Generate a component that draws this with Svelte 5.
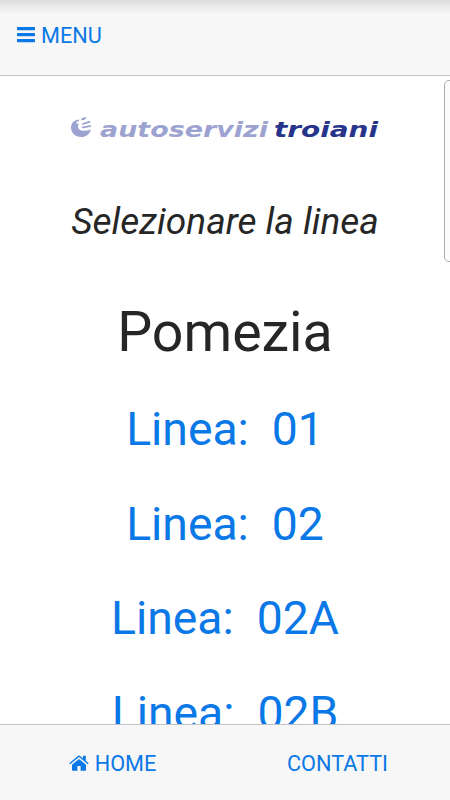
<script>
  const city = 'Pomezia';
  const lines = ['01', '02', '02A', '02B'];
</script>

<div class="app">
  <header class="navbar">
    <a class="nav-link" href="#menu">
      <svg class="bars" viewBox="0 0 18 16" aria-hidden="true">
        <rect x="0" y="0" width="18" height="3.200" rx="0.6" />
        <rect x="0" y="6" width="18" height="3.200" rx="0.6" />
        <rect x="0" y="12" width="18" height="3.200" rx="0.6" />
      </svg>
      <span>MENU</span>
    </a>
  </header>

  <main class="content">
    <svg class="logo" viewBox="0 0 310 30" role="img" aria-label="autoservizi troiani">
      <g class="mark">
        <path d="M9.200 4.400C4.500 4.400 1 8 1 12.500c0 5.400 4.400 9.500 10 9.500 5 0 9-3.300 10-7.600-2.600 1.100-5.300 1.600-8 1.300-4-.4-5.500-2.500-4.800-5.500l.4-1.800H6.200L6.800 6.600h1.900z" />
        <path d="M11.500 3.200l5-1.400-1.300 2.600-4.100 1z" />
        <path d="M12.300 8.200l7.300-2.400 1 1.700-8.500 2.400z" />
        <path d="M11.700 11.800l9.400-1.900.1 1.800-7.900 1.500c-1 .1-1.600-.4-1.600-1.400z" />
      </g>
      <text class="brand-light" x="30" y="22" textLength="168" lengthAdjust="spacingAndGlyphs">autoservizi</text>
      <text class="brand-dark" x="204" y="22" textLength="104" lengthAdjust="spacingAndGlyphs">troiani</text>
    </svg>

    <h2 class="prompt">Selezionare la linea</h2>
    <h1 class="city">{city}</h1>

    <ul class="lines">
      {#each lines as line}
        <li><a href="#linea-{line}">Linea:&nbsp; {line}</a></li>
      {/each}
    </ul>
  </main>

  <footer class="toolbar">
    <a class="nav-link" href="#home">
      <svg class="home" viewBox="0 0 20 16" aria-hidden="true">
        <path d="M10 3.900 3 9.700V15q0 .8.8.8h4.600v-4.900h3.200v4.900h4.600q.8 0 .8-.8V9.700z" />
        <path d="M.3 8.200 9.200.8q.8-.6 1.600 0L14 3.500V.7h2.800v5.100l2.900 2.400-.9 1L10 2.100 1.200 9.200z" />
      </svg>
      <span>HOME</span>
    </a>
    <a class="nav-link" href="#contatti"><span>CONTATTI</span></a>
  </footer>

  <div class="edge-handle"></div>
</div>

<style>
  :global(body) {
    margin: 0;
    background: #fff;
  }

  .app {
    position: relative;
    display: flex;
    flex-direction: column;
    width: 450px;
    height: 800px;
    overflow: hidden;
    box-sizing: border-box;
    font-family: Roboto, "Liberation Sans", sans-serif;
    color: #262626;
  }

  a {
    color: #0a78e6;
    text-decoration: none;
  }

  .navbar {
    flex: none;
    display: flex;
    align-items: flex-start;
    height: 76px;
    padding: 23px 17px 0;
    box-sizing: border-box;
    background: linear-gradient(#dcdcdc 0, #eaeaea 6px, #f7f7f7 15px);
    border-bottom: 1px solid #c2c2c2;
  }

  .nav-link {
    display: flex;
    align-items: center;
    font-size: 21.700px;
    line-height: 26px;
  }
  .nav-link svg {
    fill: #0a78e6;
  }

  .bars {
    width: 18px;
    height: 16px;
    margin: -2px 6px 0 0;
  }

  .content {
    flex: 1;
    min-height: 0;
    display: flex;
    flex-direction: column;
    align-items: center;
    overflow: hidden;
  }

  .logo {
    flex: none;
    width: 310px;
    height: 30px;
    margin-top: 39px;
  }
  .logo text {
    font-family: "DejaVu Sans", sans-serif;
    font-size: 21px;
    font-weight: 700;
    font-style: italic;
  }
  .mark,
  .brand-light {
    fill: #9da3d0;
  }
  .brand-dark {
    fill: #27348b;
  }

  .prompt {
    margin: 55px 0 0;
    font-size: 37px;
    line-height: 44px;
    font-style: italic;
    font-weight: 400;
  }

  .city {
    margin: 56px 0 0;
    font-size: 55.500px;
    line-height: 66px;
    font-weight: 400;
  }

  .lines {
    margin: 16px 0 0;
    padding: 0;
    list-style: none;
    text-align: center;
    font-size: 46.300px;
    line-height: 94.500px;
  }

  .toolbar {
    flex: none;
    display: flex;
    height: 76px;
    padding-top: 2px;
    box-sizing: border-box;
    background: #f7f7f7;
    border-top: 1px solid #c2c2c2;
  }
  .toolbar .nav-link {
    flex: 1;
    justify-content: center;
  }

  .home {
    width: 20px;
    height: 16px;
    margin: -1px 6px 0 0;
  }

  /* pull-out handle of the side panel */
  .edge-handle {
    position: absolute;
    top: 80px;
    right: -8px;
    width: 14px;
    height: 182px;
    box-sizing: border-box;
    background: #fcfcfc;
    border: 1px solid #aeaeae;
    border-radius: 5px;
  }
</style>
